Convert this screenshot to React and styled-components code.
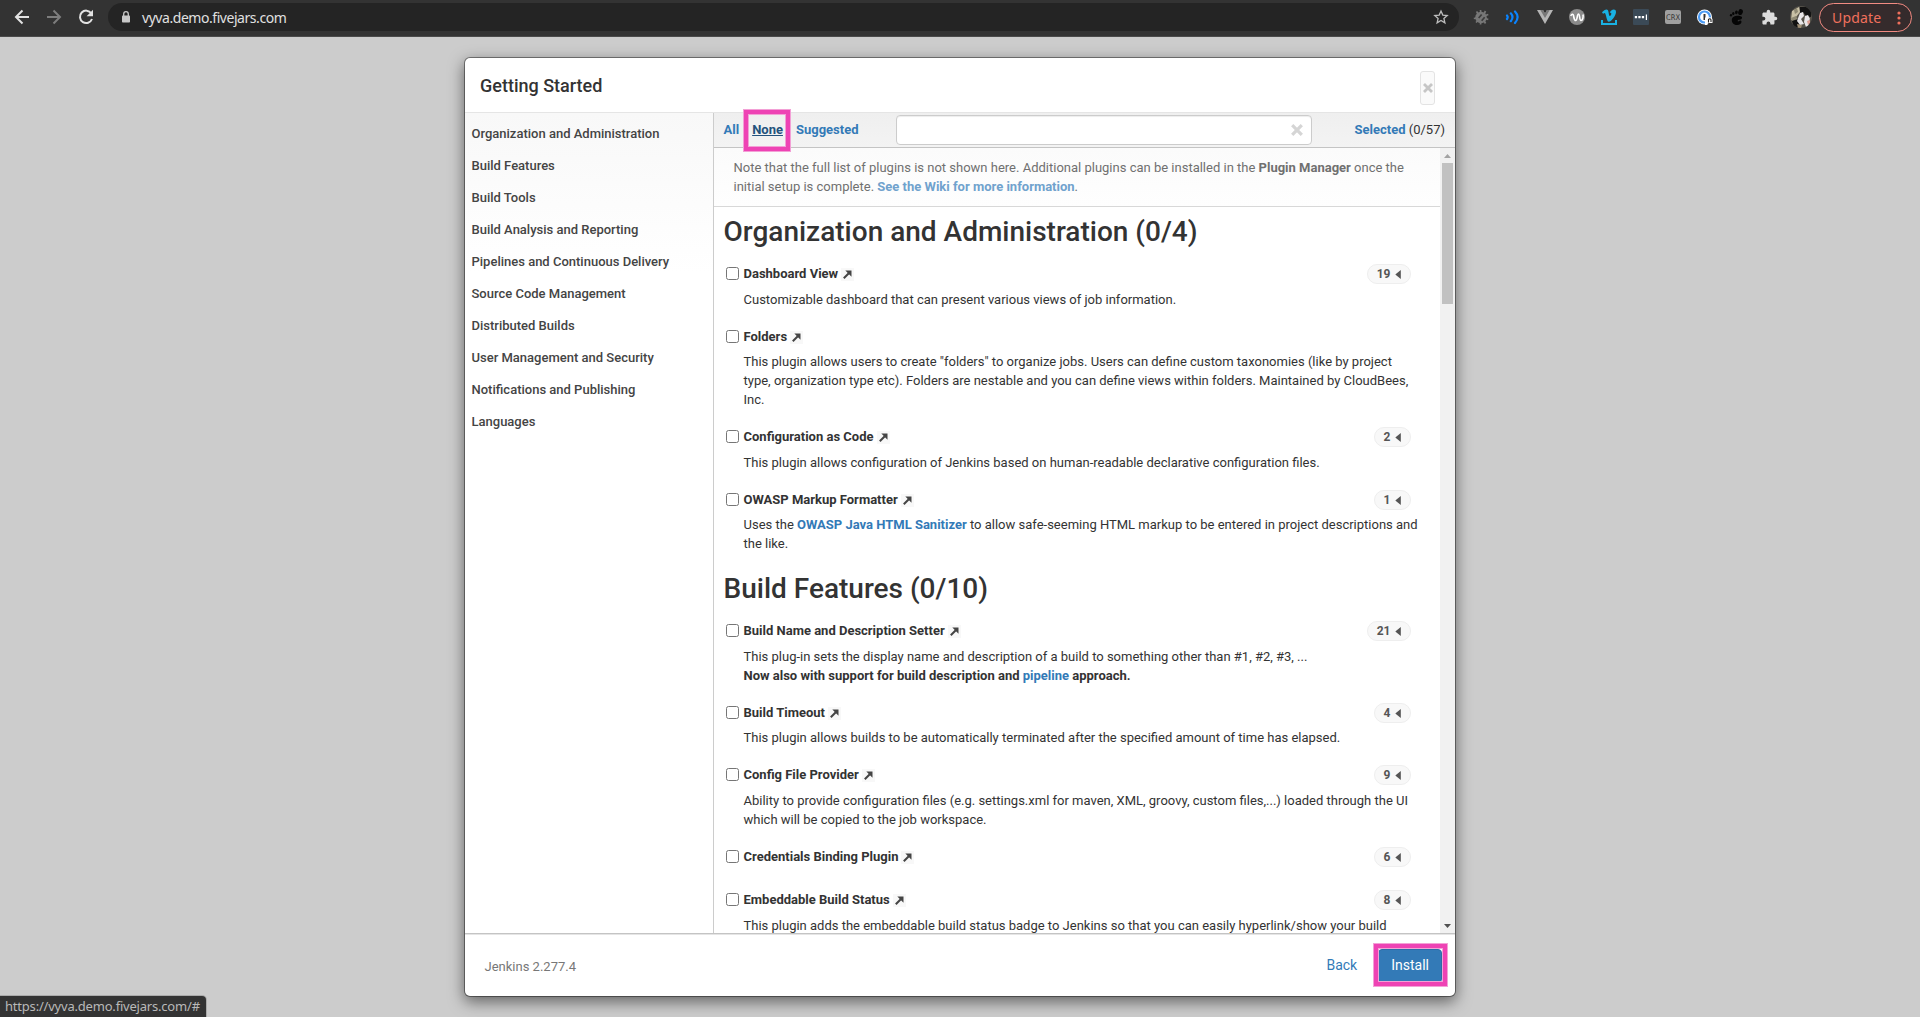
import React from "react";
import styled, { createGlobalStyle } from "styled-components";

const GlobalStyle = createGlobalStyle`
  * { box-sizing: border-box; }
  html, body { margin: 0; padding: 0; height: 100%; overflow: hidden; }
  body {
    background: #ccc;
    color: #333;
    font-family: Roboto, "Liberation Sans", sans-serif;
    font-size: 13px;
    line-height: 19px;
  }
`;

const Page = styled.div`
  position: relative;
  display: flex;
  flex-direction: column;
  width: 1920px;
  height: 1017px;
  overflow: hidden;
`;

/* ---------- browser bar ---------- */

const BrowserBar = styled.header`
  display: flex;
  align-items: flex-start;
  height: 37px;
  padding: 3px 8px 0 6px;
  background: #333;
  border-bottom: 1px solid #4a4a4a;
`;

const NavButton = styled.span`
  display: flex;
  align-items: center;
  justify-content: center;
  width: 32px;
  height: 28px;
  flex: none;
`;

const Omnibox = styled.div`
  display: flex;
  align-items: center;
  width: 1351px;
  height: 28px;
  margin: 0 6px 0 6px;
  padding: 0 10px 0 12px;
  border-radius: 14px;
  background: #242424;
  color: #e0e0e0;
`;

const Address = styled.span`
  flex: 1;
  padding-left: 10px;
  font-family: "Noto Sans", "Open Sans", sans-serif;
  font-size: 14px;
  letter-spacing: -0.45px;
`;

const UpdateButton = styled.div`
  display: flex;
  align-items: center;
  justify-content: space-between;
  width: 93px;
  height: 29px;
  margin-left: 2px;
  padding: 0 10px 0 12px;
  border: 1px solid #f28b82;
  border-radius: 15px;
  background: #352b2c;
  color: #f0705c;
  font-family: "Noto Sans", "Open Sans", sans-serif;
  font-size: 14px;
  letter-spacing: 0.2px;
`;

/* ---------- dialog ---------- */

const Dialog = styled.section`
  display: flex;
  flex-direction: column;
  align-self: center;
  width: 992px;
  height: 940px;
  margin-top: 20px;
  border: 1px solid rgba(0, 0, 0, 0.4);
  border-radius: 6px;
  background: #fff;
  background-clip: padding-box;
  box-shadow: 0 5px 15px rgba(0, 0, 0, 0.5);
  overflow: hidden;
`;

const DialogHeader = styled.div`
  display: flex;
  justify-content: space-between;
  height: 55px;
  padding: 13px 20px 0 15px;
  border-bottom: 1px solid #e5e5e5;
`;

const DialogTitle = styled.h4`
  margin: 2px 0 0;
  font-size: 18px;
  line-height: 26px;
  font-weight: 500;
`;

const CloseButton = styled.span`
  display: flex;
  align-items: center;
  justify-content: center;
  width: 15px;
  height: 34px;
  border: 1px solid #e3e3e3;
  border-radius: 3px;
  background: #fafafa;
`;

const DialogBody = styled.div`
  display: grid;
  grid-template-columns: 249px 1fr;
  height: 821px;
  border-bottom: 1px solid #c4c4c4;
`;

const Sidebar = styled.nav`
  display: flex;
  flex-direction: column;
  padding: 5px 6px 0 6.5px;
  border-right: 1px solid #ccc;
  background: linear-gradient(#f8f8f8, #fff 160px);
`;

const SidebarLink = styled.a`
  height: 32px;
  line-height: 32px;
  color: #444;
  font-weight: 500;
`;

const Main = styled.div`
  display: flex;
  flex-direction: column;
  min-width: 0;
  min-height: 0;
`;

const FilterBar = styled.div`
  display: flex;
  align-items: center;
  height: 35px;
  flex: none;
  padding: 0 10px 0 9.5px;
  border-bottom: 1px solid #c4c4c4;
  background: linear-gradient(#efefef, #f3f3f3);
`;

const Link = styled.a`
  color: #337ab7;
  font-weight: 700;
`;

const FilterLink = styled(Link)`
  margin-right: ${(p) => p.$gap}px;
  ${(p) => p.$active && "color: #23527c; text-decoration: underline;"}
`;

const FilterSet = styled.div`
  width: 172.5px;
  margin-bottom: 1px;
  flex: none;
  white-space: nowrap;
`;

const SearchBox = styled.div`
  display: flex;
  align-items: center;
  justify-content: flex-end;
  width: 416px;
  height: 30px;
  padding-right: 8px;
  border: 1px solid #ccc;
  border-radius: 4px;
  background: #fff;
  box-shadow: inset 0 1px 1px rgba(0, 0, 0, 0.075);
`;

const Selected = styled.div`
  flex: 1;
  margin-bottom: 1px;
  text-align: right;
  white-space: nowrap;
`;

const ListFrame = styled.div`
  display: flex;
  flex: 1;
  min-height: 0;
`;

const PluginList = styled.div`
  flex: 1;
  min-width: 0;
  overflow: hidden;
`;

const Note = styled.div`
  height: 59px;
  padding: 10px 0 0 19.5px;
  border-bottom: 1px solid #d8d8d8;
  background: linear-gradient(#fbfbfb, #fefefe);
  color: #707070;
  white-space: nowrap;
  ${Link} { color: #70a2cd; }
`;

const SectionTitle = styled.h2`
  margin: 0;
  padding: ${(p) => (p.$first ? 7 : 4)}px 0 0 9.5px;
  height: ${(p) => (p.$first ? 53 : 50)}px;
  font-size: 28px;
  line-height: 36px;
  font-weight: 500;
`;

const Plugin = styled.div`
  padding: 4px 20px 0 12px;
  min-height: 43px;
`;

const PluginHead = styled.div`
  display: flex;
  align-items: center;
  height: 19px;
`;

const Checkbox = styled.input`
  width: 13px;
  height: 13px;
  margin: 0 4.5px 0 0;
`;

const PluginName = styled.span`
  font-weight: 700;
  white-space: nowrap;
`;

const ExternalMark = styled.span`
  display: flex;
  align-items: center;
  justify-content: center;
  width: 13px;
  height: 13px;
  margin: 1px 0 0 3px;
  background: #f8f8f8;
`;

const DependencyBadge = styled.span`
  display: flex;
  align-items: center;
  gap: 4.5px;
  height: 20px;
  margin: 0 9.5px -1px auto;
  padding: 0 8.5px;
  border: 1px solid #eee;
  border-radius: 10px;
  background: #f8f8f8;
  color: #555;
  font-size: 12px;
  font-weight: 700;
`;

const Description = styled.div`
  padding: ${(p) => (p.$tight ? 6 : 7)}px 0 14px 17.5px;
`;

const Scrollbar = styled.div`
  display: flex;
  flex-direction: column;
  align-items: center;
  width: 15px;
  flex: none;
  background: #f1f1f1;
`;

const ScrollArrow = styled.span`
  display: flex;
  align-items: center;
  justify-content: center;
  height: 15px;
`;

const ScrollThumb = styled.div`
  width: 11px;
  height: 141px;
  margin-bottom: auto;
  background: #c1c1c1;
`;

const DialogFooter = styled.footer`
  display: flex;
  align-items: center;
  height: 62px;
  padding: 0 13px 0 19.5px;
  border-top: 1px solid #e5e5e5;
`;

const Version = styled.span`
  flex: 1;
  padding-top: 1px;
  color: #777;
`;

const FooterButton = styled.span`
  display: flex;
  align-items: center;
  justify-content: center;
  height: 34px;
  padding: 0 12px;
  margin-right: ${(p) => (p.$primary ? 0 : 8)}px;
  border: 1px solid ${(p) => (p.$primary ? "#2e6da4" : "transparent")};
  border-radius: 4px;
  background: ${(p) => (p.$primary ? "#337ab7" : "transparent")};
  color: ${(p) => (p.$primary ? "#fff" : "#337ab7")};
  font-size: 14px;
`;

/* ---------- overlays ---------- */

const Highlight = styled.div`
  position: absolute;
  left: ${(p) => p.$x}px;
  top: ${(p) => p.$y}px;
  width: ${(p) => p.$w}px;
  height: ${(p) => p.$h}px;
  border: 4px solid #ee43b4;
  box-shadow: 0 0 0 1px #f3a0d6, inset 0 0 0 1px #f3a0d6;
`;

const StatusBubble = styled.div`
  position: absolute;
  left: 0;
  bottom: 0;
  width: 206px;
  height: 21px;
  padding-left: 5px;
  border-top-right-radius: 4px;
  background: #333;
  box-shadow: 0 0 0 1px #aaa;
  color: #b9b9b9;
  font-family: "Noto Sans", "Open Sans", sans-serif;
  font-size: 13px;
  line-height: 21px;
  letter-spacing: -0.2px;
  white-space: nowrap;
`;

/* ---------- icons ---------- */

const Icon = ({ size = 16, box = 16, children, ...rest }) => (
  <svg width={size} height={size} viewBox={`0 0 ${box} ${box}`} fill="none" {...rest}>
    {children}
  </svg>
);

const BackIcon = () => (
  <Icon stroke="#e2e2e2" strokeWidth="2"><path d="M15 8H2.5M8.5 1.5 2 8l6.5 6.5" /></Icon>
);
const ForwardIcon = () => (
  <Icon stroke="#7d7d7d" strokeWidth="2"><path d="M1 8h12.500M7.500 1.500 14 8l-6.500 6.500" /></Icon>
);
const ReloadIcon = () => (
  <Icon><path d="M13.300 4.300A6.200 6.200 0 1 0 14 10" stroke="#e2e2e2" strokeWidth="2" /><path d="M15 .8v6.400H8.600z" fill="#e2e2e2" /></Icon>
);
const LockIcon = () => (
  <Icon size={12} box={12}><rect x="2" y="4.500" width="8" height="7" rx=".8" fill="#c8c8c8" /><path d="M3.700 5V3a2.300 2.300 0 0 1 4.600 0v2" stroke="#c8c8c8" strokeWidth="1.300" /></Icon>
);
const StarIcon = () => (
  <Icon><path d="m8 2 1.800 4.100 4.400.4-3.300 2.900 1 4.400L8 11.500l-3.900 2.300 1-4.400L1.800 6.500l4.400-.4z" stroke="#bdbdbd" strokeWidth="1.300" /></Icon>
);

const extensions = [
  <Icon key="bug">
    <circle cx="8" cy="8.500" r="5.800" fill="#777" />
    <path d="m3.500 2.500 1.500 2M7.500 1l.3 3M12.500 2 11 5M15.300 5.500l-3 1M15.300 10.500l-3-1M12.500 14.500l-1.500-3M7.500 15.500l.3-3M3 13.500l2-2M.8 9.500 4 9" stroke="#777" strokeWidth="1.700" />
    <path d="m5 8.500 3-3.500 1.300 1.100-3 3.500zM8 11.200l3-3.500 1.300 1.100-3 3.500z" fill="#3c3c3c" />
  </Icon>,
  <Icon key="waves" stroke="#0a84ff" strokeWidth="2.200" strokeLinecap="round">
    <path d="M2 6.500q1.400 1.500 0 3.500M5.800 4.300q3.400 3.700 0 7.900M10 2.500q5.200 5.500 0 11.500" />
  </Icon>,
  <Icon key="vue">
    <path d="M0 1h6l2 3.500L10 1h6L8 15z" fill="#b5b5b5" /><path d="M3.300 1H6l2 3.500L10 1h2.700L8 9z" fill="#777" />
  </Icon>,
  <Icon key="w">
    <circle cx="8" cy="8" r="8" fill="#8b8b8b" />
    <path d="M1.800 7C2.500 5 4 4.500 4.500 6.500S5 11.500 6.700 11.500 8 5 9.500 5s.8 6.500 2.500 6.500S14.500 8 14 5.500" stroke="#fff" strokeWidth="1.600" />
  </Icon>,
  <Icon key="vimeo">
    <path d="M0 11h2v3h12v-3h2v5H0z" fill="#19b1e3" />
    <path d="M1 3.200C3 1.200 5.500-.5 6.800 1c1 1.300 1 6 2 6s2.200-2.700 1-3.200c-.8-.2-1 .2-1 .2.500-3.500 6.400-5.200 6.200-.8C14.800 7 10 12.800 7.800 12.800S5 4.200 3.800 4L2 4.800z" fill="#19b1e3" />
  </Icon>,
  <Icon key="dots">
    <rect width="16" height="16" rx="1" fill="#3b4a57" />
    <path d="M1.800 7h2.300v2.300H1.800zm3.500 0h2.300v2.300H5.300zM8.800 7h2.300v2.300H8.800zm4-1.500h1.200v5.500h-1.200z" fill="#fff" />
  </Icon>,
  <Icon key="crx">
    <rect y="1" width="16" height="14" rx="2" fill="#a0a0a0" />
    <text x="8" y="10.800" fontSize="7.800" textLength="14" textAnchor="middle" fill="#303030" fontFamily="DejaVu Sans, sans-serif" lengthAdjust="spacingAndGlyphs">CRX</text>
  </Icon>,
  <Icon key="password">
    <circle cx="7.500" cy="8" r="7.500" fill="#fff" /><circle cx="7.500" cy="8" r="5.500" stroke="#4a9bf5" strokeWidth="2.200" />
    <path d="M6.500 5h2v6h-2z" fill="#333" />
    <path d="M8 8.500h2.500V16H8zM10.500 9.500q3-2.500 5 .5v4h-5z" fill="#fff" />
    <path d="M11.500 13.500v-3q1.500-1.500 2.500.3v2.200" stroke="#222" strokeWidth="1.100" />
  </Icon>,
  <Icon key="gnome" fill="#050505">
    <path d="M13 8.200C11.500 5.800 2.800 6 2.800 11c0 3.500 2.500 5 5.200 5 2.800 0 4.500-1.500 4.500-3.200 0-1.300-1.600-1.800-2.500-.8-.7.800-1.500.3-1.300-.6.300-1 1.700-.4 2.800-.9 1-.4 1.900-1.500 1.500-2.300z" />
    <ellipse cx="11.500" cy="3.100" rx="2.300" ry="3" transform="rotate(18 11.500 3.100)" />
    <ellipse cx="7.400" cy="3.300" rx="1.400" ry="1.900" transform="rotate(8 7.400 3.300)" /><ellipse cx="4.300" cy="4.400" rx="1.200" ry="1.500" /><ellipse cx="2" cy="6.300" rx="1.100" ry="1.300" />
  </Icon>,
  <Icon key="puzzle" box={24} size={17} fill="#dcdcdc">
    <path d="M20.500 11H19V7c0-1.100-.9-2-2-2h-4V3.500a2.500 2.500 0 0 0-5 0V5H4c-1.100 0-2 .9-2 2v3.800h1.500a2.700 2.700 0 0 1 0 5.400H2V20c0 1.100.9 2 2 2h3.800v-1.500a2.700 2.700 0 0 1 5.400 0V22H17c1.100 0 2-.9 2-2v-4h1.500a2.500 2.500 0 0 0 0-5z" />
  </Icon>,
  <Icon key="avatar" size={22} box={22}>
    <clipPath id="avatar-clip"><circle cx="11" cy="11" r="11" /></clipPath>
    <g clipPath="url(#avatar-clip)">
      <path fill="#57534a" d="M0 0h22v22H0z" />
      <path fill="#c9c1a6" d="M2 5 9 1l1 5-4 5-5 3z" />
      <path fill="#8f8a74" d="m4 4 3-2 1 4-3 2zM1 12l5-2 2 4-6 1z" />
      <path fill="#121212" d="M10 1h7l5 4-1 6-5-1-3-4-3 3zM2 15l6-2 2 3-2 5H4z" />
      <path fill="#e8e6e8" d="m10 7 3-1 1 4-3 3 3 5-4 1-3-4zM15 10l3-1 2 4-2 3 1 4-3 1-2-5z" />
      <path fill="#dc9d92" d="m17 15 3-1v3l-2 2z" /><path fill="#a08f75" d="m7 18 5 1-1 3H8z" />
    </g>
  </Icon>,
];

const Cross = ({ size, color, weight }) => (
  <Icon size={size} box={10} stroke={color} strokeWidth={weight}><path d="m1 1 8 8M9 1 1 9" /></Icon>
);
const ArrowUpRight = () => (
  <Icon size={9} box={9}><path d="m.8 8.200 5-5" stroke="#444" strokeWidth="2" /><path d="M2.300.5h6.200v6.200z" fill="#444" /></Icon>
);

/* ---------- data ---------- */

const categories = [
  "Organization and Administration", "Build Features", "Build Tools", "Build Analysis and Reporting",
  "Pipelines and Continuous Delivery", "Source Code Management", "Distributed Builds",
  "User Management and Security", "Notifications and Publishing", "Languages",
];

const sections = [
  {
    title: "Organization and Administration (0/4)",
    plugins: [
      { name: "Dashboard View", deps: 19, text: "Customizable dashboard that can present various views of job information." },
      { name: "Folders", tight: true, text: 'This plugin allows users to create "folders" to organize jobs. Users can define custom taxonomies (like by project type, organization type etc). Folders are nestable and you can define views within folders. Maintained by CloudBees, Inc.' },
      { name: "Configuration as Code", deps: 2, text: "This plugin allows configuration of Jenkins based on human-readable declarative configuration files." },
      { name: "OWASP Markup Formatter", deps: 1, tight: true, text: <>Uses the <Link>OWASP Java HTML Sanitizer</Link> to allow safe-seeming HTML markup to be entered in project descriptions and the like.</> },
    ],
  },
  {
    title: "Build Features (0/10)",
    plugins: [
      { name: "Build Name and Description Setter", deps: 21, text: <>This plug-in sets the display name and description of a build to something other than #1, #2, #3, ...<br /><b>Now also with support for build description and <Link>pipeline</Link> approach.</b></> },
      { name: "Build Timeout", deps: 4, tight: true, text: "This plugin allows builds to be automatically terminated after the specified amount of time has elapsed." },
      { name: "Config File Provider", deps: 9, text: "Ability to provide configuration files (e.g. settings.xml for maven, XML, groovy, custom files,...) loaded through the UI which will be copied to the job workspace." },
      { name: "Credentials Binding Plugin", deps: 6 },
      { name: "Embeddable Build Status", deps: 8, text: "This plugin adds the embeddable build status badge to Jenkins so that you can easily hyperlink/show your build" },
    ],
  },
];

const PluginRow = ({ name, deps, text, tight }) => (
  <Plugin>
    <PluginHead>
      <Checkbox type="checkbox" />
      <PluginName>{name}</PluginName>
      <ExternalMark><ArrowUpRight /></ExternalMark>
      {deps && (
        <DependencyBadge>
          {deps}
          <Icon width={6} height={9} viewBox="0 0 6 9"><path d="M5.800 0v9L.3 4.500z" fill="#555" /></Icon>
        </DependencyBadge>
      )}
    </PluginHead>
    {text && <Description $tight={tight}>{text}</Description>}
  </Plugin>
);

export default function App() {
  return (
    <Page>
      <GlobalStyle />
      <BrowserBar>
        <NavButton><BackIcon /></NavButton>
        <NavButton><ForwardIcon /></NavButton>
        <NavButton><ReloadIcon /></NavButton>
        <Omnibox>
          <LockIcon />
          <Address>vyva.demo.fivejars.com</Address>
          <StarIcon />
        </Omnibox>
        {extensions.map((icon) => <NavButton key={icon.key}>{icon}</NavButton>)}
        <UpdateButton>
          Update
          <Icon width={4} height={14} viewBox="0 0 4 14" fill="#f0705c"><circle cx="2" cy="2" r="1.600" /><circle cx="2" cy="7" r="1.600" /><circle cx="2" cy="12" r="1.600" /></Icon>
        </UpdateButton>
      </BrowserBar>

      <Dialog>
        <DialogHeader>
          <DialogTitle>Getting Started</DialogTitle>
          <CloseButton><Cross size={10} color="#c6c6c6" weight={2.8} /></CloseButton>
        </DialogHeader>
        <DialogBody>
          <Sidebar>
            {categories.map((c) => <SidebarLink key={c}>{c}</SidebarLink>)}
          </Sidebar>
          <Main>
            <FilterBar>
              <FilterSet>
                <FilterLink $gap={13}>All</FilterLink>
                <FilterLink $gap={13} $active>None</FilterLink>
                <FilterLink $gap={0}>Suggested</FilterLink>
              </FilterSet>
              <SearchBox><Cross size={12} color="#d5d5d5" weight={2.7} /></SearchBox>
              <Selected><Link>Selected</Link> (0/57)</Selected>
            </FilterBar>
            <ListFrame>
              <PluginList>
                <Note>
                  Note that the full list of plugins is not shown here. Additional plugins can be installed in the <b>Plugin Manager</b> once the<br />
                  initial setup is complete. <Link>See the Wiki for more information</Link>.
                </Note>
                {sections.map((s, i) => (
                  <React.Fragment key={s.title}>
                    <SectionTitle $first={i === 0}>{s.title}</SectionTitle>
                    {s.plugins.map((p) => <PluginRow key={p.name} {...p} />)}
                  </React.Fragment>
                ))}
              </PluginList>
              <Scrollbar>
                <ScrollArrow><Icon width={7} height={4} viewBox="0 0 7 4"><path d="M3.500 0 7 4H0z" fill="#a3a3a3" /></Icon></ScrollArrow>
                <ScrollThumb />
                <ScrollArrow><Icon width={7} height={4} viewBox="0 0 7 4"><path d="M3.500 4 7 0H0z" fill="#505050" /></Icon></ScrollArrow>
              </Scrollbar>
            </ListFrame>
          </Main>
        </DialogBody>
        <DialogFooter>
          <Version>Jenkins 2.277.4</Version>
          <FooterButton>Back</FooterButton>
          <FooterButton $primary>Install</FooterButton>
        </DialogFooter>
      </Dialog>

      <Highlight $x={744} $y={110} $w={46} $h={41} />
      <Highlight $x={1374} $y={944} $w={73} $h={42} />
      <StatusBubble>https://vyva.demo.fivejars.com/#</StatusBubble>
    </Page>
  );
}
